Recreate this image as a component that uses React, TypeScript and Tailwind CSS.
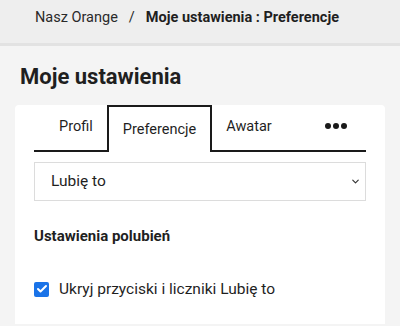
import { Check, ChevronDown } from "lucide-react";

const tabs = ["Profil", "Preferencje", "Awatar"];

export default function App() {
    return (
        <div className="min-h-[326px] bg-[#f4f4f4] font-['Roboto',sans-serif] text-[#1f1f1f]">
            {/* Breadcrumb */}
            <div className="h-[46px] border-b-[3px] border-[#e2e2e2] bg-[#eeeeee] pt-[9px] pl-[35px] text-[14.5px] leading-[17px]">
                <span className="text-[#2a2a2a]">Nasz Orange</span>
                <span className="mx-[11px] text-[#2a2a2a]">/</span>
                <span className="font-bold">Moje ustawienia : Preferencje</span>
            </div>

            <h1 className="px-[20px] pt-[14px] pb-[12px] text-[22px] leading-[33px] font-bold">
                Moje ustawienia
            </h1>

            <div className="mx-[15px] rounded-t-[4px] bg-white px-[19px] pb-6">
                {/* Tabs */}
                <div className="flex h-[47px] items-stretch border-b-2 border-[#1a1a1a] text-[14.5px]">
                    <div className="w-[11px]" />
                    {tabs.map((tab) =>
                        tab === "Preferencje" ? (
                            <div
                                key={tab}
                                className="-mb-[2px] flex items-center border-x-2 border-t-2 border-[#1a1a1a] bg-white px-[14px]"
                            >
                                {tab}
                            </div>
                        ) : (
                            <div key={tab} className="flex items-center px-[14px] pb-[2px]">
                                {tab}
                            </div>
                        )
                    )}
                    <div className="flex flex-1 items-center justify-center pb-[4px] pl-[20px]">
                        <span className="flex gap-[2px]">
                            <span className="h-[6px] w-[6px] rounded-full bg-[#1a1a1a]" />
                            <span className="h-[6px] w-[6px] rounded-full bg-[#1a1a1a]" />
                            <span className="h-[6px] w-[6px] rounded-full bg-[#1a1a1a]" />
                        </span>
                    </div>
                </div>

                {/* Select */}
                <div className="relative mt-[10px]">
                    <select className="h-[39px] w-full appearance-none border border-[#dcdcdc] bg-white pl-[16px] text-[15.5px] text-[#1f1f1f] outline-none">
                        <option>Lubię to</option>
                    </select>
                    <ChevronDown
                        className="pointer-events-none absolute top-[14px] right-[5px] h-[11px] w-[11px] text-[#333]"
                        strokeWidth={2.5}
                    />
                </div>

                <h2 className="mt-[25px] text-[15px] leading-[20px] font-bold">Ustawienia polubień</h2>

                <label className="mt-[32px] flex items-center gap-[10px] text-[15.5px] leading-[22px]">
                    <span className="flex h-[15px] w-[15px] items-center justify-center rounded-[2px] bg-[#1a73e8]">
                        <Check className="h-[12px] w-[12px] text-white" strokeWidth={4} />
                    </span>
                    Ukryj przyciski i liczniki Lubię to
                </label>
            </div>
        </div>
    );
}
